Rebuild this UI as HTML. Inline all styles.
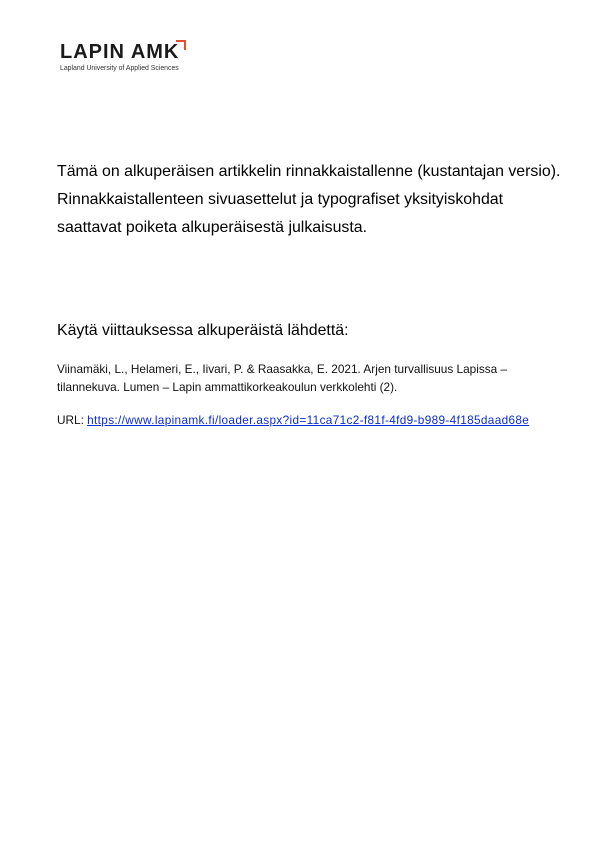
<!DOCTYPE html>
<html><head><meta charset="utf-8"><style>
body{margin:0;background:#fff;width:595px;height:841px;position:relative;font-family:"Liberation Sans",Arial,sans-serif;color:#000}
.a{position:absolute;white-space:nowrap}
.big{font-size:15.9px;left:57px}
.sm{font-size:11.8px;left:57px;color:#111}
a{color:#0b2ccf;text-decoration:underline;letter-spacing:0.34px}
</style></head><body>
<div class="a" style="left:60px;top:41px;font-size:20px;font-weight:bold;letter-spacing:1px;color:#1a1a1a">LAPIN AMK</div>
<div class="a" style="left:176px;top:40px;width:8px;height:8px;border-top:2px solid #e4502d;border-right:2px solid #e4502d"></div>
<div class="a" style="left:60px;top:65px;font-size:6.9px;color:#333">Lapland University of Applied Sciences</div>
<div class="a big" style="top:163px">Tämä on alkuperäisen artikkelin rinnakkaistallenne (kustantajan versio).</div>
<div class="a big" style="top:191px">Rinnakkaistallenteen sivuasettelut ja typografiset yksityiskohdat</div>
<div class="a big" style="top:219px">saattavat poiketa alkuperäisestä julkaisusta.</div>
<div class="a big" style="top:322px">Käytä viittauksessa alkuperäistä lähdettä:</div>
<div class="a sm" style="top:362px">Viinamäki, L., Helameri, E., Iivari, P. &amp; Raasakka, E. 2021. Arjen turvallisuus Lapissa –</div>
<div class="a sm" style="top:380px">tilannekuva. Lumen – Lapin ammattikorkeakoulun verkkolehti (2).</div>
<div class="a sm" style="top:413px">URL: <a>https://www.lapinamk.fi/loader.aspx?id=11ca71c2-f81f-4fd9-b989-4f185daad68e</a></div>
</body></html>
